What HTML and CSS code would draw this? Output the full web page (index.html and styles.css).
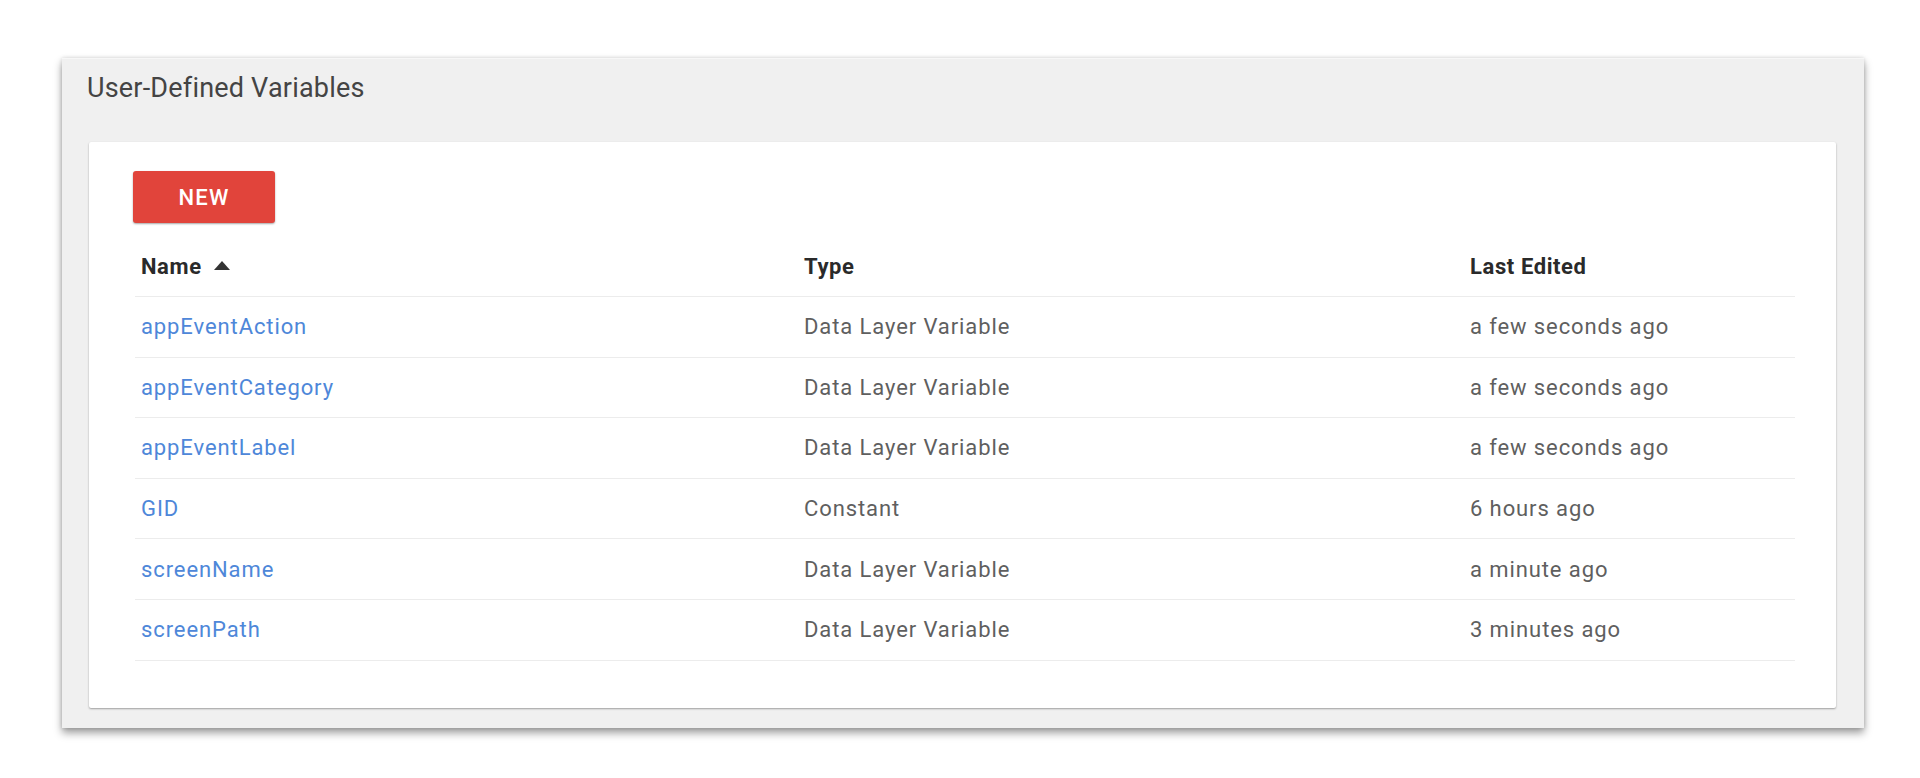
FILE: index.html
```html
<!DOCTYPE html>
<html>
<head>
<meta charset="utf-8">
<link rel="stylesheet" href="styles.css">
</head>
<body>
<div class="page">
  <section class="panel">
    <header class="panel-head">User-Defined Variables</header>
    <div class="card">
      <button class="btn-new">NEW</button>
      <div class="table">
        <div class="row head">
          <div class="cell c1">Name <span class="sort"></span></div>
          <div class="cell c2">Type</div>
          <div class="cell c3">Last Edited</div>
        </div>
        <div class="row">
          <div class="cell c1"><a class="link">appEventAction</a></div>
          <div class="cell c2">Data Layer Variable</div>
          <div class="cell c3">a few seconds ago</div>
        </div>
        <div class="row">
          <div class="cell c1"><a class="link">appEventCategory</a></div>
          <div class="cell c2">Data Layer Variable</div>
          <div class="cell c3">a few seconds ago</div>
        </div>
        <div class="row">
          <div class="cell c1"><a class="link">appEventLabel</a></div>
          <div class="cell c2">Data Layer Variable</div>
          <div class="cell c3">a few seconds ago</div>
        </div>
        <div class="row">
          <div class="cell c1"><a class="link">GID</a></div>
          <div class="cell c2">Constant</div>
          <div class="cell c3">6 hours ago</div>
        </div>
        <div class="row">
          <div class="cell c1"><a class="link">screenName</a></div>
          <div class="cell c2">Data Layer Variable</div>
          <div class="cell c3">a minute ago</div>
        </div>
        <div class="row">
          <div class="cell c1"><a class="link">screenPath</a></div>
          <div class="cell c2">Data Layer Variable</div>
          <div class="cell c3">3 minutes ago</div>
        </div>
      </div>
    </div>
  </section>
</div>
</body>
</html>
```

FILE: styles.css
```css
html, body {
  margin: 0;
  padding: 0;
  background: #ffffff;
  font-family: Roboto, "Liberation Sans", Arial, sans-serif;
}

body {
  min-height: 778px;
}

.page {
  padding: 58px 56px 0 62px;
}

.panel {
  width: 1802px;
  box-sizing: border-box;
  background: #f0f0f0;
  border-top: 1px solid #f7f7f7;
  box-shadow: 0 5px 8px rgba(0, 0, 0, 0.38), 0 0 4px rgba(0, 0, 0, 0.15);
  padding: 0 28px 20px 27px;
}

.panel-head {
  height: 83px;
  box-sizing: border-box;
  padding-top: 13px;
  font-size: 27px;
  line-height: 32px;
  color: #444444;
  letter-spacing: 0.2px;
  margin-left: -2px;
}

.card {
  background: #ffffff;
  border-radius: 2px;
  box-shadow: 0 1px 2px rgba(0, 0, 0, 0.35);
  padding: 29px 41px 47px 44px;
}

.btn-new {
  display: block;
  width: 142px;
  height: 52px;
  border: none;
  border-radius: 3px;
  background: #e1443b;
  box-shadow: 0 1px 2px rgba(0, 0, 0, 0.35);
  color: #ffffff;
  font-family: Roboto, "Liberation Sans", Arial, sans-serif;
  font-size: 22px;
  font-weight: 500;
  letter-spacing: 1.2px;
  padding: 0;
}

.table {
  margin-left: 2px;
}

.row {
  display: flex;
  align-items: center;
  height: 60.6px;
  box-sizing: border-box;
  border-bottom: 1px solid #ececec;
  font-size: 22px;
  letter-spacing: 0.9px;
  color: #5f5f5f;
}

.row.head {
  height: 74px;
  padding-top: 13px;
  font-weight: 700;
  color: #2a2a2a;
  letter-spacing: 0.6px;
}

.cell {
  box-sizing: border-box;
  padding-left: 6px;
}

.c1 { width: 663px; display: flex; align-items: center; }
.c2 { width: 666px; }
.c3 { flex: 1; }

.sort {
  display: inline-block;
  width: 0;
  height: 0;
  margin-left: 12px;
  border-left: 8px solid transparent;
  border-right: 8px solid transparent;
  border-bottom: 9px solid #333333;
  margin-top: -2px;
}

.link {
  color: #4e87d9;
  text-decoration: none;
}
```
